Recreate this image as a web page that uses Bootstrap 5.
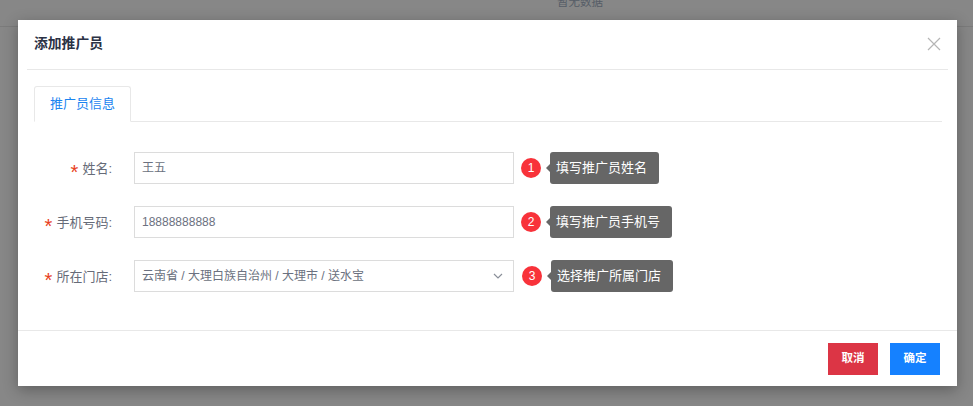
<!DOCTYPE html>
<html lang="zh">
<head>
<meta charset="utf-8">
<title>添加推广员</title>
<link href="https://cdn.jsdelivr.net/npm/bootstrap@5.3.0/dist/css/bootstrap.min.css" rel="stylesheet">
<style>
html,body{height:100%;overflow:hidden}
body{background:#878787;font-family:"Liberation Sans","Noto Sans CJK SC",sans-serif;font-size:12px;color:#606266;position:relative}
.bg-strip{height:27px;border-bottom:1px solid #7b7b7b;position:relative;overflow:hidden}
.bg-text{position:absolute;left:557px;top:-7px;font-size:11.5px;line-height:18px;color:#555c66}
.dlg{position:absolute;left:18px;top:20px;width:939px;height:366px;background:#fff;box-shadow:0 4px 14px rgba(0,0,0,.3);display:flex;flex-direction:column}
.dlg-head{height:50px;margin:0 9px;padding:0 7px;border-bottom:1px solid #e8e8e8;display:flex;align-items:center;justify-content:space-between}
.dlg-title{font-size:13.8px;font-weight:700;color:#2b3245;line-height:20px;margin-top:-2px}
.dlg-x{width:16px;height:16px;margin-right:-1px;margin-top:-1px;display:block}
.dlg-body{flex:1;padding:16px 15px 0 16px}
.tab-line{height:36px;border-bottom:1px solid #e8e8e8;display:flex}
.tab-one{width:97px;height:36px;border:1px solid #e8e8e8;border-bottom:1px solid #fff;border-radius:3px 3px 0 0;color:#1a84f0;font-size:13px;display:flex;align-items:center;justify-content:center;background:#fff}
.form-area{padding-top:30px}
.f-row{display:flex;align-items:center;height:32px;margin-bottom:22px}
.f-label{width:100px;padding-right:22px;padding-top:2px;text-align:right;font-size:13px;color:#666b78;white-space:nowrap}
.f-star{color:#e8401c;margin-right:4px;font-size:20px;line-height:0;vertical-align:-6px}
.f-input{width:380px;height:32px;border:1px solid #dcdcdc;padding:0 7px;display:flex;align-items:center;justify-content:space-between;font-size:12px;color:#6b7180;background:#fff}
.f-input svg{margin-right:3px}
.num-dot{width:20px;height:20px;border-radius:50%;background:#f8323a;color:#fff;font-size:12px;display:flex;align-items:center;justify-content:center;margin-left:7px;flex:none;margin-top:-1px}
.tip-box{position:relative;height:32px;margin-left:9px;background:#666;color:#fff;border-radius:3px;padding:0 12px 0 6px;font-size:13px;display:flex;align-items:center;white-space:nowrap;margin-top:-1px}
.tip-box::before{content:"";position:absolute;left:-4px;top:12px;border-style:solid;border-width:4px 4px 4px 0;border-color:transparent #666 transparent transparent}
.shift-1{margin-left:8px}
.dlg-foot{height:56px;border-top:1px solid #e8e8e8;display:flex;justify-content:flex-end;align-items:flex-start;gap:12px;padding:12px 17px 0 0}
.foot-btn{width:50px;height:32px;padding:0;border:0;border-radius:0;color:#fff;font-size:11.5px;font-weight:700}
.foot-red{background:#dc3545}
.foot-blue{background:#1581ff}
.foot-red:hover{background:#dc3545;color:#fff}
.foot-blue:hover{background:#1581ff;color:#fff}
</style>
</head>
<body>
<div class="bg-strip"><span class="bg-text">暂无数据</span></div>
<div class="dlg" role="dialog">
  <div class="dlg-head">
    <span class="dlg-title">添加推广员</span>
    <svg class="dlg-x" viewBox="0 0 16 16"><path d="M2 2 L14 14 M14 2 L2 14" stroke="#b5b5b5" stroke-width="1.2" fill="none"/></svg>
  </div>
  <div class="dlg-body">
    <div class="tab-line"><div class="tab-one">推广员信息</div></div>
    <div class="form-area">
      <div class="f-row">
        <div class="f-label"><span class="f-star">*</span>姓名:</div>
        <div class="f-input">王五</div>
        <span class="num-dot">1</span>
        <div class="tip-box">填写推广员姓名</div>
      </div>
      <div class="f-row">
        <div class="f-label"><span class="f-star">*</span>手机号码:</div>
        <div class="f-input">18888888888</div>
        <span class="num-dot">2</span>
        <div class="tip-box">填写推广员手机号</div>
      </div>
      <div class="f-row">
        <div class="f-label"><span class="f-star">*</span>所在门店:</div>
        <div class="f-input">云南省 / 大理白族自治州 / 大理市 / 送水宝
          <svg width="10" height="6" viewBox="0 0 10 6"><path d="M1 1 L5 5 L9 1" stroke="#8a8f99" stroke-width="1.2" fill="none"/></svg>
        </div>
        <span class="num-dot shift-1">3</span>
        <div class="tip-box">选择推广所属门店</div>
      </div>
    </div>
  </div>
  <div class="dlg-foot">
    <button class="btn foot-btn foot-red">取消</button>
    <button class="btn foot-btn foot-blue">确定</button>
  </div>
</div>
<script src="https://cdn.jsdelivr.net/npm/bootstrap@5.3.0/dist/js/bootstrap.bundle.min.js"></script>
</body>
</html>
